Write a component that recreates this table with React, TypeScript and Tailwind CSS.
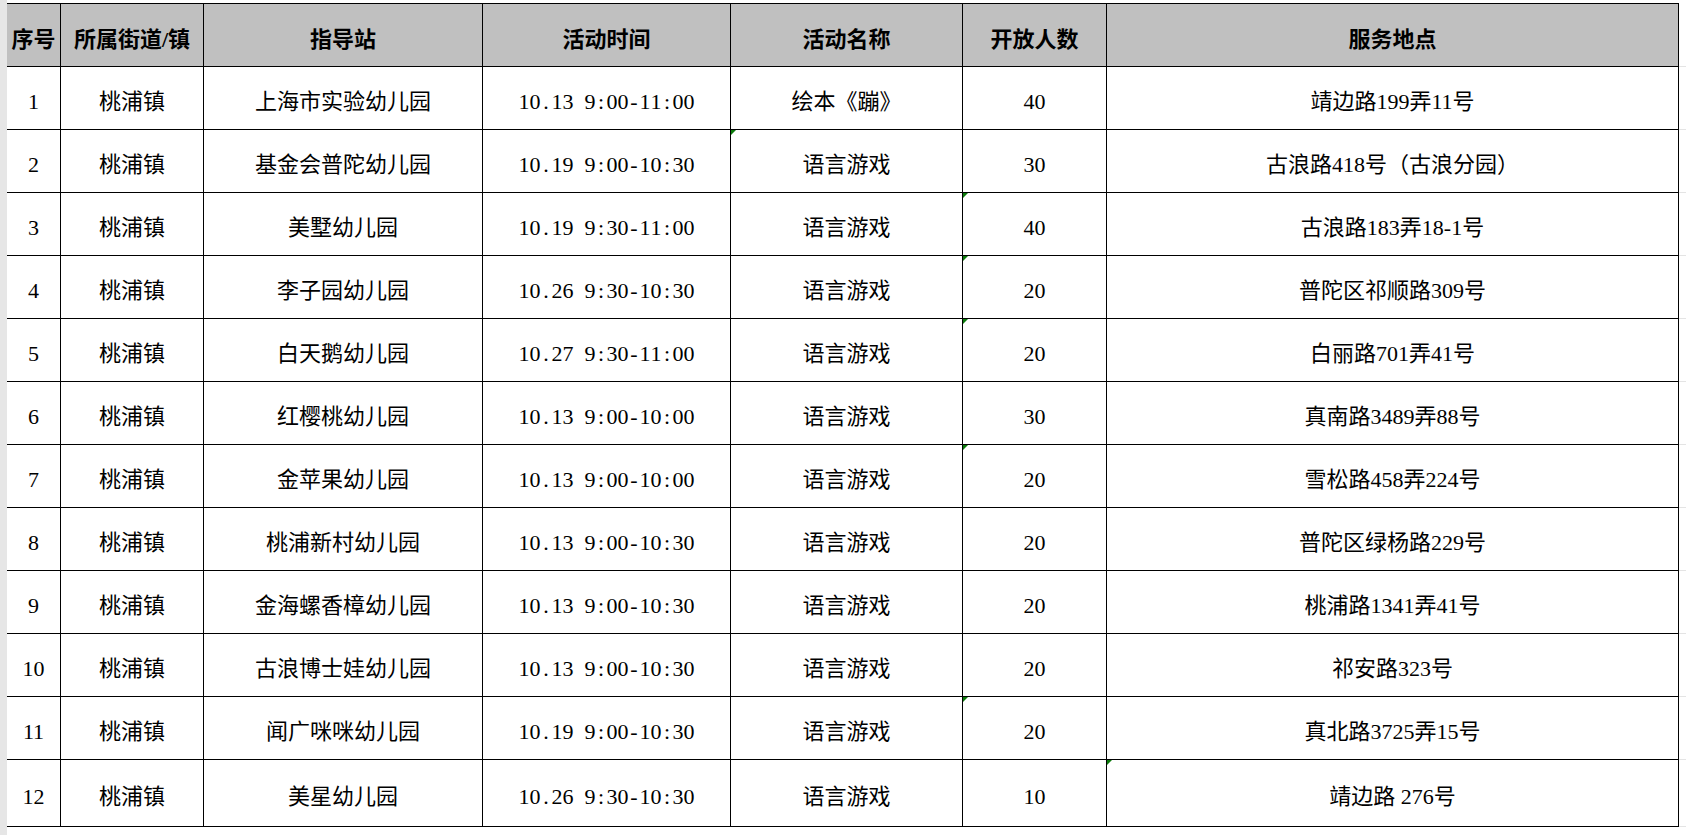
import React from 'react';

type Row = {
  no: number;
  town: string;
  station: string;
  time: string;
  name: string;
  count: string;
  place: string;
  flag?: 'name' | 'count' | 'place';
};

const rows: Row[] = [
  { no: 1, town: '桃浦镇', station: '上海市实验幼儿园', time: '10.13 9:00-11:00', name: '绘本《蹦》', count: '40', place: '靖边路199弄11号' },
  { no: 2, town: '桃浦镇', station: '基金会普陀幼儿园', time: '10.19 9:00-10:30', name: '语言游戏', count: '30', place: '古浪路418号（古浪分园）', flag: 'name' },
  { no: 3, town: '桃浦镇', station: '美墅幼儿园', time: '10.19 9:30-11:00', name: '语言游戏', count: '40', place: '古浪路183弄18-1号', flag: 'count' },
  { no: 4, town: '桃浦镇', station: '李子园幼儿园', time: '10.26 9:30-10:30', name: '语言游戏', count: '20', place: '普陀区祁顺路309号', flag: 'count' },
  { no: 5, town: '桃浦镇', station: '白天鹅幼儿园', time: '10.27 9:30-11:00', name: '语言游戏', count: '20', place: '白丽路701弄41号', flag: 'count' },
  { no: 6, town: '桃浦镇', station: '红樱桃幼儿园', time: '10.13 9:00-10:00', name: '语言游戏', count: '30', place: '真南路3489弄88号' },
  { no: 7, town: '桃浦镇', station: '金苹果幼儿园', time: '10.13 9:00-10:00', name: '语言游戏', count: '20', place: '雪松路458弄224号', flag: 'count' },
  { no: 8, town: '桃浦镇', station: '桃浦新村幼儿园', time: '10.13 9:00-10:30', name: '语言游戏', count: '20', place: '普陀区绿杨路229号' },
  { no: 9, town: '桃浦镇', station: '金海螺香樟幼儿园', time: '10.13 9:00-10:30', name: '语言游戏', count: '20', place: '桃浦路1341弄41号' },
  { no: 10, town: '桃浦镇', station: '古浪博士娃幼儿园', time: '10.13 9:00-10:30', name: '语言游戏', count: '20', place: '祁安路323号' },
  { no: 11, town: '桃浦镇', station: '闻广咪咪幼儿园', time: '10.19 9:00-10:30', name: '语言游戏', count: '20', place: '真北路3725弄15号', flag: 'count' },
  { no: 12, town: '桃浦镇', station: '美星幼儿园', time: '10.26 9:30-10:30', name: '语言游戏', count: '10', place: '靖边路 276号', flag: 'place' },
];

const headers = ['序号', '所属街道/镇', '指导站', '活动时间', '活动名称', '开放人数', '服务地点'];

const Marker = () => (
  <span className="absolute left-0 top-0 h-0 w-0 border-t-[5px] border-r-[5px] border-t-[#0b7a0b] border-r-transparent" />
);

const Cell = ({ children, flag, tall }: { children: React.ReactNode; flag?: boolean; tall?: boolean }) => (
  <div
    className={`relative flex items-center justify-center border-b border-r border-black pt-[7px] whitespace-nowrap ${
      tall ? 'h-[67px]' : 'h-[63px]'
    }`}
  >
    {flag && <Marker />}
    {children}
  </div>
);

// half-width fixed cells, like the sheet's monospace digits
const Mono = ({ text }: { text: string }) => (
  <span className="flex">
    {text.split('').map((c, i) => (
      <span key={i} className="inline-block w-[11px] text-center">
        {c === ' ' ? '\u00a0' : c}
      </span>
    ))}
  </span>
);

export default function App() {
  return (
    <div
      className="flex h-[835px] w-[1686px] overflow-hidden bg-white text-[22px] text-black"
      style={{ fontFamily: '"Liberation Serif", "Noto Sans CJK SC", serif' }}
    >
      <div className="w-[7px] shrink-0 bg-[#e6e6e6]" />
      <div className="pt-[3px]">
        <div className="grid grid-cols-[54px_143px_279px_248px_232px_144px_572px] border-t border-black">
          {headers.map((h) => (
            <div
              key={h}
              className="flex h-[63px] items-center justify-center border-b border-r border-black bg-[#c0c0c0] pt-[9px] text-[22px] font-bold whitespace-nowrap"
            >
              {h}
            </div>
          ))}
          {rows.map((r, i) => {
            const tall = i === rows.length - 1;
            return (
              <React.Fragment key={r.no}>
                <Cell tall={tall}>{r.no}</Cell>
                <Cell tall={tall}>{r.town}</Cell>
                <Cell tall={tall}>{r.station}</Cell>
                <Cell tall={tall}>
                  <Mono text={r.time} />
                </Cell>
                <Cell tall={tall} flag={r.flag === 'name'}>{r.name}</Cell>
                <Cell tall={tall} flag={r.flag === 'count'}>{r.count}</Cell>
                <Cell tall={tall} flag={r.flag === 'place'}>{r.place}</Cell>
              </React.Fragment>
            );
          })}
        </div>
      </div>
      <div className="flex flex-col pt-[3px]">
        <div className="h-[64px] w-[8px] border-b border-[#e4e4e4]" />
        {rows.map((r, i) => (
          <div key={r.no} className={`${i === rows.length - 1 ? 'h-[67px]' : 'h-[63px]'} w-[8px] border-b border-[#e4e4e4]`} />
        ))}
      </div>
    </div>
  );
}
